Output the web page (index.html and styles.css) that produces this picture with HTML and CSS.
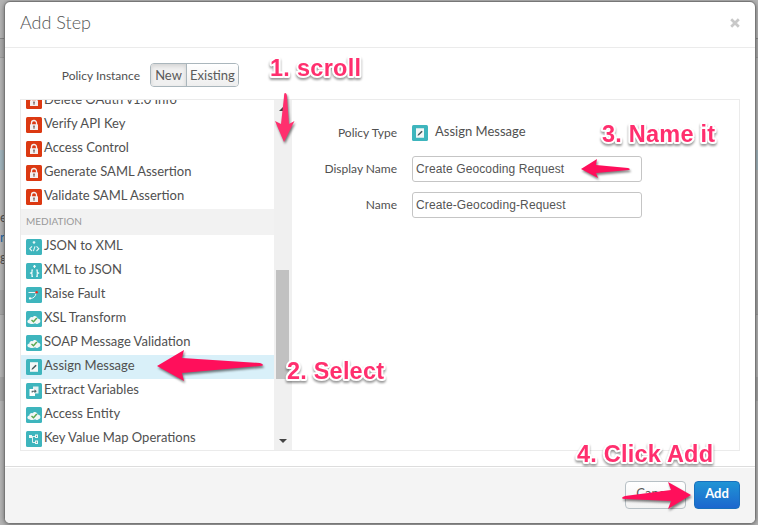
FILE: index.html
```html
<!DOCTYPE html>
<html lang="en">
<head>
<meta charset="utf-8">
<title>Add Step</title>
<link rel="stylesheet" href="styles.css">
</head>
<body>
<svg class="defs" width="0" height="0" aria-hidden="true">
  <symbol id="lock" viewBox="0 0 16 16"><rect width="16" height="16" rx="1.5" fill="#dc3912"/><path d="M5.500 8V6a2.500 2.500 0 0 1 5 0v2" fill="none" stroke="#f4efee" stroke-width="1.300"/><rect x="4" y="7.300" width="8" height="5.700" rx=".6" fill="#f4efee"/><path d="M8 8.600v3.200M7.200 9.200h1.600" stroke="#6d5550" stroke-width="1.100"/></symbol>
  <symbol id="xml" viewBox="0 0 16 16"><rect width="16" height="16" rx="1.5" fill="#3eb5bd"/><path d="M8 2v3M6.700 3.400h2.600M6 7.400 3.700 9.700 6 12M10.500 7.400l2.300 2.300-2.300 2.300M9 7.400 7.400 12.200" fill="none" stroke="#e5f6f7" stroke-width="1.100"/></symbol>
  <symbol id="json" viewBox="0 0 16 16"><rect width="16" height="16" rx="1.5" fill="#3eb5bd"/><path d="M8.500 2v3M7.200 3.400h2.600M7 7H6v2.300l-1.300.8 1.300.8v2.400h1M10.200 7h1v2.300l1.300.8-1.300.8v2.400h-1" fill="none" stroke="#f0fafa" stroke-width="1.200"/></symbol>
  <symbol id="fault" viewBox="0 0 16 16"><rect width="16" height="16" rx="1.5" fill="#3eb5bd"/><path d="M2.500 5.500h8M10 6.500c-.5 3-2.500 4.800-5.500 5" fill="none" stroke="#e6f6f7" stroke-width="1"/><circle cx="4" cy="11.400" r="1.100" fill="#fff"/><circle cx="10.600" cy="5.300" r="1.200" fill="#ed281d"/></symbol>
  <symbol id="cloud" viewBox="0 0 16 16"><rect width="16" height="16" rx="1.5" fill="#3eb5bd"/><path d="M3.700 12.500C.6 12.300.7 8.700 3.400 8.500 3.200 6.200 5.600 5.300 6.700 6.300 8 4 11.500 5 11.500 7.600c3.700.2 3.800 4.600.7 4.900-1 .8-2.400.7-3-.2-1.400 1-4.400.9-5.500.2z" fill="#f2f7f6"/><path d="m5.500 8.900 2 1.900 3.300-3.800" fill="none" stroke="#58a84d" stroke-width="1.400"/></symbol>
  <symbol id="assign" viewBox="0 0 16 16"><rect width="16" height="16" rx="1.5" fill="#3eb5bd"/><path d="M4 3.200h8v9.600H4z" fill="#f4f7f7"/><path d="m5.500 10.700.5-1.400 3.500-3.600 1.200 1.100-3.700 3.400z" fill="#46575a"/></symbol>
  <symbol id="extract" viewBox="0 0 16 16"><rect width="16" height="16" rx="1.5" fill="#3eb5bd"/><path d="M7 3.500h5.500v7H7z" fill="#e6f1f2"/><path d="M3.500 6H9v7H3.500z" fill="#fff"/><path d="M6.200 9.500V8.200h3" fill="none" stroke="#4e6265" stroke-width="1.100"/><path d="M8.500 6.200 10.700 8.200 8.500 10.200z" fill="#4e6265"/></symbol>
  <symbol id="map" viewBox="0 0 16 16"><rect width="16" height="16" rx="1.5" fill="#3eb5bd"/><path d="M5 5.500h5M6.500 5.500v6H9" fill="none" stroke="#dff2f3" stroke-width="1"/><path d="M3 4h3v3H3zM9 3.500h3V7H9zM9 9.500h3V13H9z" fill="#edf8f8"/><path d="M10 5.300h1M10 11.200h1" stroke="#477" stroke-width="1"/></symbol>
</svg>

<section class="modal">
  <header class="modal-header"><h1>Add Step</h1>
    <svg class="close" viewBox="0 0 10 10"><path d="m1.200 1.200 7.600 7.600m0-7.600-7.600 7.600" stroke="#c8c8c8" stroke-width="2.700"/></svg>
  </header>
  <div class="modal-body">
    <div class="instance"><span class="instance-label">Policy Instance</span><div class="toggle"><button class="on">New</button><button>Existing</button></div></div>
    <div class="panel">
      <div class="list">
        <ul class="items">
          <li><svg><use href="#lock"/></svg>Delete OAuth v1.0 Info</li>
          <li><svg><use href="#lock"/></svg>Verify API Key</li>
          <li><svg><use href="#lock"/></svg>Access Control</li>
          <li><svg><use href="#lock"/></svg>Generate SAML Assertion</li>
          <li><svg><use href="#lock"/></svg>Validate SAML Assertion</li>
          <li class="category">MEDIATION</li>
          <li><svg><use href="#xml"/></svg>JSON to XML</li>
          <li><svg><use href="#json"/></svg>XML to JSON</li>
          <li><svg><use href="#fault"/></svg>Raise Fault</li>
          <li><svg><use href="#cloud"/></svg>XSL Transform</li>
          <li><svg><use href="#cloud"/></svg>SOAP Message Validation</li>
          <li class="selected"><svg><use href="#assign"/></svg>Assign Message</li>
          <li><svg><use href="#extract"/></svg>Extract Variables</li>
          <li><svg><use href="#cloud"/></svg>Access Entity</li>
          <li><svg><use href="#map"/></svg>Key Value Map Operations</li>
        </ul>
      </div>
      <div class="scrollbar"><i class="up"></i><i class="thumb"></i><i class="down"></i></div>
      <div class="form">
        <span class="label">Policy Type</span><span class="type"><svg><use href="#assign"/></svg>Assign Message</span>
        <span class="label">Display Name</span><input value="Create Geocoding Request">
        <span class="label">Name</span><input value="Create-Geocoding-Request">
      </div>
    </div>
  </div>
  <footer><button class="cancel">Cancel</button><button class="add">Add</button></footer>
</section>

<div class="behind"><span>e</span><span class="link">n</span><span>g</span></div>

<svg class="notes" viewBox="0 0 758 525">
  <g class="arrows">
    <path d="M285 93q2 0 2 4l2 27 5.500-3-10.500 21-9-21 6 3 3-27q0-4 1-4z" fill="#ff2f6e"/>
    <path d="M157 366l27-16-2 8 78 5q3 1 3 2t-3 1l-78 7 2 8z"/>
    <path d="M581 169l16-10-1 6 32 3q3 1 1 2l-33 3 2 5z"/>
    <path d="M691 495l-23-13 3 8-46 6q-3 1-3 2t3 1l46 2-3 8z"/>
  </g>
  <g class="captions">
    <text x="270" y="76" textLength="91">1. scroll</text>
    <text x="287" y="379" textLength="97">2. Select</text>
    <text x="602" y="142" textLength="113">3. Name it</text>
    <text x="577" y="462" textLength="136">4. Click Add</text>
  </g>
</svg>
</body>
</html>
```
FILE: styles.css
```css
* { box-sizing: border-box; }
body {
  margin: 0; width: 758px; height: 525px; overflow: hidden; padding: 1px 2px 0 4px;
  font: 13px/24px Lato, sans-serif; color: #505050;
  background: linear-gradient(#b3b3b3 38px, #858585 38px 39px, #a9a9a9 39px 57px, #999 57px 58px, #b3b3b3 58px 150px, #a0b3bb 150px 170px, #b3b3b3 170px 290px, #a5a5a5 290px 314px, #999 314px 315px, #b3b3b3 315px 377px, #a3a3a3 377px 401px, #b3b3b3 401px);
}
.defs { position: absolute; }
.modal {
  height: 523px; width: 752px; display: flex; flex-direction: column; overflow: hidden;
  background: #fff; border: 1px solid #777; border-radius: 6px; box-shadow: 0 1px 4px rgba(0,0,0,.4);
}
.modal-header {
  height: 46px; border-bottom: 1px solid #ebebeb; display: flex; align-items: center;
  justify-content: space-between; padding: 0 15px; flex: none;
}
h1 { margin: 0 0 5px; font-size: 18px; font-weight: 300; color: #555; }
.close { width: 10px; height: 10px; margin: 0 0 4px; }
.modal-body { padding: 15px 15px 0 15px; height: 418px; flex: none; }
.instance { display: flex; height: 24px; }
.instance-label { width: 120px; text-align: right; font-size: 12px; line-height: 25px; }
.toggle { display: flex; margin-left: 10px; border: 1px solid #aab6bc; border-radius: 4px; overflow: hidden; width: 89px; }
button { font: 13px/20px Lato, sans-serif; color: #5a5a5a; padding: 0; }
.toggle button { border: 0; flex: 1; background: linear-gradient(#fff, #eee); padding-bottom: 1px; }
.toggle .on { flex: 0 0 36px; background: #f0f0f0; border-right: 1px solid #aab6bc; box-shadow: inset 0 2px 4px rgba(0,0,0,.13); }
.panel { display: flex; height: 352px; margin-top: 12px; border: 1px solid #ebebeb; }
.list { width: 253px; overflow: hidden; }
.items { list-style: none; margin: -11px 0 0; padding: 0; }
li { height: 24px; padding-left: 5px; display: flex; line-height: 20px; white-space: nowrap; }
li svg, .type svg { width: 16px; height: 16px; margin: 4px 2px 0 0; flex: none; }
.category { height: 26px; background: #f2f2f2; color: #999; font-size: 10px; line-height: 25px; }
.selected { background: #d9f0f9; }
.scrollbar { width: 18px; background: #f0f0f0; display: flex; flex-direction: column; align-items: center; }
.up, .down { width: 0; height: 0; border: 4px solid transparent; }
.up { border-top: 0; border-bottom-color: #444; margin-top: 7px; }
.thumb { width: 13px; height: 109px; background: #c1c1c1; margin-top: 159px; margin-right: 1px; }
.down { border-bottom: 0; border-top-color: #444; margin-top: 60px; margin-right: 1px; }
.form {
  display: grid; grid-template-columns: 105px 230px; column-gap: 15px;
  grid-template-rows: 26px 26px 26px; row-gap: 10px; padding-top: 20px; align-content: start;
}
.label { text-align: right; font-size: 12px; line-height: 26px; }
.type { display: flex; line-height: 23px; }
.type svg { margin: 5px 7px 0 0; }
input { width: 230px; height: 26px; border: 1px solid #c5c5c5; border-radius: 3px; padding: 0 3px 1px; font: 12px "Liberation Sans", sans-serif; letter-spacing: .12px; color: #555; }
footer { flex: 1; background: #f4f4f4; border-top: 1px solid #ddd; box-shadow: inset 0 1px #fff; display: flex; justify-content: flex-end; gap: 8px; padding: 14px 15px 0; }
footer button { height: 28px; border-radius: 4px; padding-bottom: 4px; }
.cancel { width: 61px; border: 1px solid #b7c0c5; background: linear-gradient(#fff, #f2f2f2); }
.add { width: 46px; border: 1px solid #1970bd; background: linear-gradient(#2094d5, #1c67ce); color: #fff; font-weight: 700; }
.behind { position: absolute; left: 0; top: 207px; width: 5px; overflow: hidden; line-height: 20px; display: flex; flex-direction: column; z-index: -1; }
.behind .link { color: #1761a0; }
.notes { position: absolute; inset: 0; width: 758px; height: 525px; pointer-events: none; }
.arrows { fill: #ff0f5b; filter: drop-shadow(1px 2px 1px rgba(0,0,0,.5)); }
.captions { font: bold 23.5px "Liberation Sans", sans-serif; fill: #ff2f6e; stroke: #fff; stroke-width: 4px; stroke-linejoin: round; paint-order: stroke; filter: drop-shadow(0 2px 1px rgba(0,0,0,.4)); }
```
